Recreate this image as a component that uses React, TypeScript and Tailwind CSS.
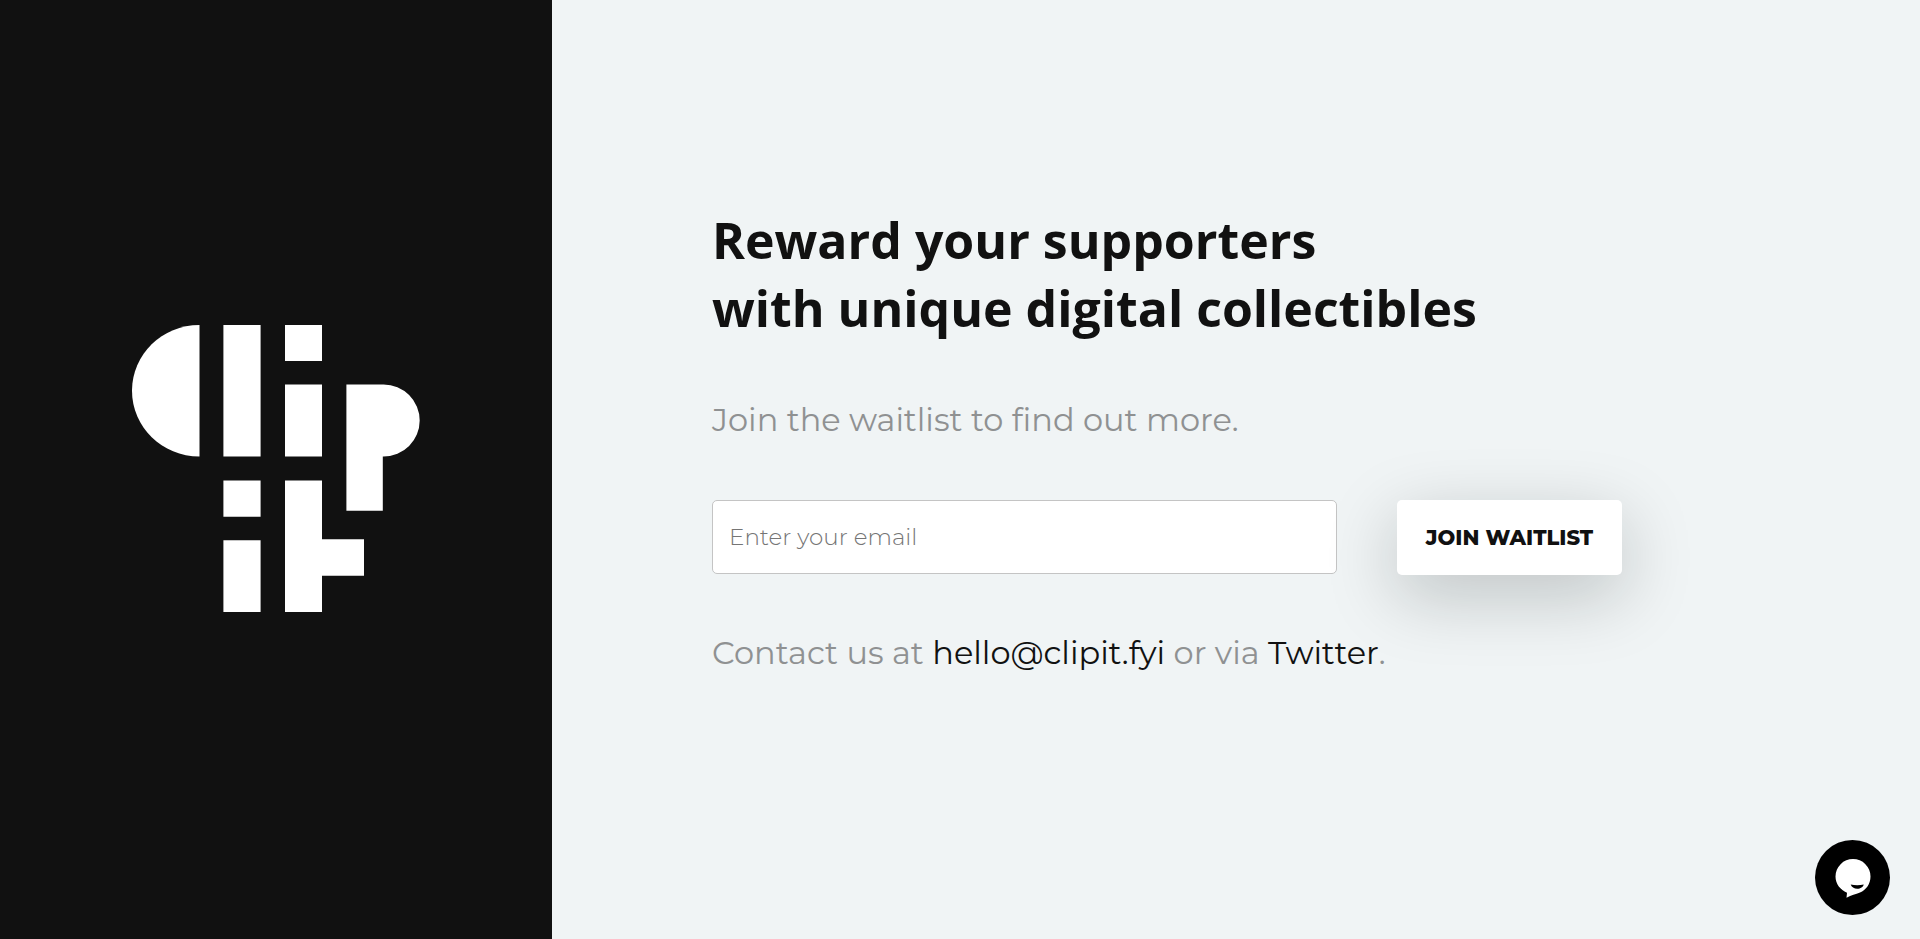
import React from "react";

function Logo() {
  return (
    <svg
      role="img"
      aria-label="Clip it"
      viewBox="0 0 288 289"
      className="h-[289px] w-[288px] fill-white"
    >
      <path d="M67.500 0v131.600C30 131.600 0 102 0 65.800S30 0 67.500 0Z" />
      <path d="M91.400 0h37.200v131.600h-37.200z" />
      <path d="M153 0h37v36h-37z" />
      <path d="M153 59.400h37v72.200h-37z" />
      <path d="M214.400 59.400h37.200a36.100 36.100 0 0 1 0 72.200h-.8v54.100h-36.400z" />
      <path d="M91.400 155.400h37.200v36.400h-37.200z" />
      <path d="M91.400 215.200h37.200V287h-37.200z" />
      <path d="M153 155.400h37v58.900h42v36.400h-42V287h-37z" />
    </svg>
  );
}

function WaitlistForm() {
  return (
    <form
      className="mt-[52px] flex flex-wrap items-start gap-[60px]"
      onSubmit={(e) => e.preventDefault()}
    >
      <input
        id="email"
        type="email"
        aria-label="Email"
        placeholder="Enter your email"
        className="h-[74px] w-full max-w-[625px] rounded-[5px] border border-[#c4c4c4] bg-white px-4 text-[23px] font-light text-[#111111] placeholder:text-[#757575]"
      />
      <button
        type="submit"
        className="h-[75px] min-w-[225px] rounded-[5px] bg-white px-7 text-[21px] font-extrabold text-[#111111] shadow-[0_20px_70px_rgba(10,20,18,0.22)]"
      >
        JOIN WAITLIST
      </button>
    </form>
  );
}

function ChatButton() {
  return (
    <button
      type="button"
      aria-label="Open chat"
      className="fixed right-[30px] bottom-6 size-[75px] rounded-full bg-black"
    >
      <svg viewBox="0 0 75 75" className="size-full">
        <path
          d="M38 19a17.500 17.500 0 0 1 17.500 17.500c0 7.500-4.500 13.500-10.500 16-4.500 1.800-8.500 2.300-13.500 5.200l.5-5C25.500 50 20.500 44 20.500 36.500A17.500 17.500 0 0 1 38 19Z"
          fill="#fff"
        />
        <path d="M35.700 44.500c4 .9 9 .9 13 0-.5 2.600-3.200 4.300-6.400 4.300s-5.900-1.700-6.600-4.300Z" />
      </svg>
    </button>
  );
}

export default function App() {
  return (
    <div className="flex min-h-screen bg-[#f0f4f5] font-[Montserrat,Inter,sans-serif]">
      <aside className="flex w-[28.75%] shrink-0 items-center justify-center bg-[#111111]">
        <Logo />
      </aside>
      <main className="flex min-w-0 flex-1 flex-col px-40 pt-[206px] text-[#8f9192]">
        <h1 className="font-['Open_Sans',sans-serif] text-[50px] leading-[68px] font-bold text-[#111111]">
          Reward your supporters
          <br />
          with unique digital collectibles
        </h1>
        <p className="mt-[50px] text-[32px] leading-[56px]">
          Join the waitlist to find out more.
        </p>
        <WaitlistForm />
        <p className="mt-[50px] text-[32px] leading-[56px]">
          Contact us at{" "}
          <a href="mailto:hello@clipit.fyi" className="text-[#111111]">
            hello@clipit.fyi
          </a>{" "}
          or via{" "}
          <a href="https://twitter.com" className="text-[#111111]">
            Twitter
          </a>
          .
        </p>
      </main>
      <ChatButton />
    </div>
  );
}
